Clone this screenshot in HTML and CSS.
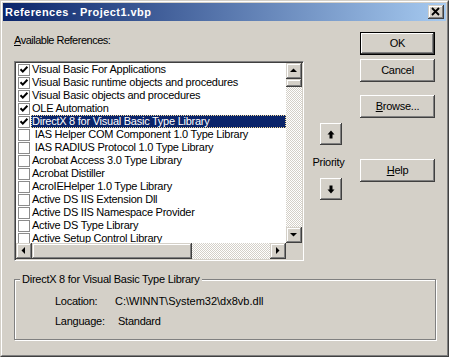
FILE: index.html
```html
<!DOCTYPE html>
<html>
<head>
<meta charset="utf-8">
<title>References - Project1.vbp</title>
<link rel="stylesheet" href="styles.css">
</head>
<body>
<div class="window">
  <div class="frame">
    <div class="titlebar">
      <span class="title">References - Project1.vbp</span>
      <button class="close" aria-label="Close">
        <svg width="16" height="14" viewBox="0 0 16 14"><path d="M4 3 L11 10 M11 3 L4 10" stroke="#000" stroke-width="1.8" fill="none"/></svg>
      </button>
    </div>
    <div class="body">
      <div class="main">
        <div class="left">
          <div class="label"><u>A</u>vailable References:</div>
          <div class="listbox">
            <div class="items">
              <div class="row"><span class="cb on"><svg width="10" height="10" viewBox="0 0 10 10"><path d="M1.5 4.2 L3.8 6.6 L8.4 1.8" stroke="#000" stroke-width="2" fill="none"/></svg></span><span class="txt">Visual Basic For Applications</span></div>
              <div class="row"><span class="cb on"><svg width="10" height="10" viewBox="0 0 10 10"><path d="M1.5 4.2 L3.8 6.6 L8.4 1.8" stroke="#000" stroke-width="2" fill="none"/></svg></span><span class="txt">Visual Basic runtime objects and procedures</span></div>
              <div class="row"><span class="cb on"><svg width="10" height="10" viewBox="0 0 10 10"><path d="M1.5 4.2 L3.8 6.6 L8.4 1.8" stroke="#000" stroke-width="2" fill="none"/></svg></span><span class="txt">Visual Basic objects and procedures</span></div>
              <div class="row"><span class="cb on"><svg width="10" height="10" viewBox="0 0 10 10"><path d="M1.5 4.2 L3.8 6.6 L8.4 1.8" stroke="#000" stroke-width="2" fill="none"/></svg></span><span class="txt">OLE Automation</span></div>
              <div class="row selected"><span class="cb on"><svg width="10" height="10" viewBox="0 0 10 10"><path d="M1.5 4.2 L3.8 6.6 L8.4 1.8" stroke="#000" stroke-width="2" fill="none"/></svg></span><span class="txt">DirectX 8 for Visual Basic Type Library</span></div>
              <div class="row"><span class="cb"></span><span class="txt"> IAS Helper COM Component 1.0 Type Library</span></div>
              <div class="row"><span class="cb"></span><span class="txt"> IAS RADIUS Protocol 1.0 Type Library</span></div>
              <div class="row"><span class="cb"></span><span class="txt">Acrobat Access 3.0 Type Library</span></div>
              <div class="row"><span class="cb"></span><span class="txt">Acrobat Distiller</span></div>
              <div class="row"><span class="cb"></span><span class="txt">AcroIEHelper 1.0 Type Library</span></div>
              <div class="row"><span class="cb"></span><span class="txt">Active DS IIS Extension Dll</span></div>
              <div class="row"><span class="cb"></span><span class="txt">Active DS IIS Namespace Provider</span></div>
              <div class="row"><span class="cb"></span><span class="txt">Active DS Type Library</span></div>
              <div class="row"><span class="cb"></span><span class="txt">Active Setup Control Library</span></div>
            </div>
            <div class="vscroll">
              <div class="sbtn"><svg width="16" height="16" viewBox="0 0 16 16"><path d="M4 9 L11 9 L7.5 5.5 Z" fill="#000"/></svg></div>
              <div class="vthumb"></div>
              <div class="track"></div>
              <div class="sbtn"><svg width="16" height="16" viewBox="0 0 16 16"><path d="M4 6 L11 6 L7.5 9.5 Z" fill="#000"/></svg></div>
            </div>
            <div class="hscroll">
              <div class="sbtn"><svg width="16" height="16" viewBox="0 0 16 16"><path d="M9 4 L9 11 L5.5 7.5 Z" fill="#000"/></svg></div>
              <div class="hthumb"></div>
              <div class="track"></div>
              <div class="sbtn"><svg width="16" height="16" viewBox="0 0 16 16"><path d="M6 4 L6 11 L9.5 7.5 Z" fill="#000"/></svg></div>
            </div>
            <div class="corner"></div>
          </div>
        </div>
        <div class="priority">
          <button class="btn arrow" aria-label="Move up"><svg width="8" height="9" viewBox="0 0 8 9"><path d="M4 0.5 L7.5 4.5 L5.5 4.5 L5.5 8.5 L2.5 8.5 L2.5 4.5 L0.5 4.5 Z" fill="#000"/></svg></button>
          <div class="plabel">Priority</div>
          <button class="btn arrow" aria-label="Move down"><svg width="8" height="9" viewBox="0 0 8 9"><path d="M4 8.5 L7.5 4.5 L5.5 4.5 L5.5 0.5 L2.5 0.5 L2.5 4.5 L0.5 4.5 Z" fill="#000"/></svg></button>
        </div>
        <div class="buttons">
          <button class="btn push default">OK</button>
          <button class="btn push cancel">Cancel</button>
          <button class="btn push browse"><u>B</u>rowse...</button>
          <button class="btn push help"><u>H</u>elp</button>
        </div>
      </div>
      <fieldset class="group">
        <legend>DirectX 8 for Visual Basic Type Library</legend>
        <div class="info">
          <span class="k">Location:</span><span class="v path">C:\WINNT\System32\dx8vb.dll</span>
          <span class="k">Language:</span><span class="v lang">Standard</span>
        </div>
      </fieldset>
    </div>
  </div>
</div>
</body>
</html>
```
FILE: styles.css
```css
* { box-sizing: border-box; }
html, body { margin: 0; padding: 0; background: #d4d0c8; }
body {
  font-family: "Liberation Sans", Arial, sans-serif;
  font-size: 11px;
  line-height: 13px;
  letter-spacing: -0.25px;
  color: #000;
}
.window {
  width: 449px;
  height: 357px;
  border: 1px solid;
  border-color: #d4d0c8 #404040 #404040 #d4d0c8;
  background: #d4d0c8;
}
.frame {
  height: 100%;
  border: 1px solid;
  border-color: #fff #808080 #808080 #fff;
  padding: 1px;
}
.titlebar {
  height: 18px;
  display: flex;
  align-items: center;
  justify-content: space-between;
  padding: 0 2px 0 2px;
  background: linear-gradient(to right, #0a246a, #a6caf0);
}
.title {
  color: #fff;
  font-weight: bold;
  font-size: 11px;
  letter-spacing: 0.45px;
}
.close {
  width: 16px;
  height: 14px;
  padding: 0;
  border: none;
  background: #d4d0c8;
  box-shadow: inset -1px -1px #404040, inset 1px 1px #d4d0c8, inset -2px -2px #808080, inset 2px 2px #fff;
  display: flex;
}
.close svg { display: block; }

.main { display: flex; align-items: flex-start; }
.left { margin-left: 11px; width: 290px; padding-top: 13px; }
.label { height: 13px; letter-spacing: -0.5px; }
.listbox {
  margin-top: 14px;
  width: 290px;
  height: 200px;
  border: 1px solid;
  border-color: #808080 #fff #fff #808080;
  box-shadow: inset 1px 1px #404040, inset -1px -1px #d4d0c8;
  padding: 1px;
  display: grid;
  grid-template-columns: 270px 16px;
  grid-template-rows: 180px 16px;
  background: #fff;
}
.items { overflow: hidden; background: #fff; }
.row {
  height: 13px;
  display: flex;
  align-items: center;
  padding-left: 2px;
  white-space: pre;
}
.cb {
  width: 12px;
  height: 12px;
  flex: none;
  border: 1px solid #8c8c8c;
  background: #fff;
  margin-right: 1px;
  display: flex;
}
.cb svg { display: block; margin: 0; }
.txt { padding-left: 1px; height: 13px; line-height: 13px; }
.row.selected .txt {
  flex: 1;
  background: #0a246a;
  color: #fff;
  outline: 1px dotted #f5db95;
  outline-offset: -1px;
}
.sbtn {
  width: 16px;
  height: 16px;
  flex: none;
  background: #d4d0c8;
  box-shadow: inset -1px -1px #404040, inset 1px 1px #d4d0c8, inset -2px -2px #808080, inset 2px 2px #fff;
}
.sbtn svg { display: block; }
.track {
  flex: 1;
  background-color: #fff;
  background-image: repeating-conic-gradient(#d4d0c8 0 25%, #fff 0 50%);
  background-size: 2px 2px;
}
.vscroll { display: flex; flex-direction: column; }
.vthumb, .hthumb {
  flex: none;
  background: #d4d0c8;
  box-shadow: inset -1px -1px #404040, inset 1px 1px #d4d0c8, inset -2px -2px #808080, inset 2px 2px #fff;
}
.vthumb { height: 8px; }
.hscroll { display: flex; }
.hthumb { width: 160px; }
.corner { background: #d4d0c8; }

.priority {
  margin-left: 16px;
  width: 22px;
  padding-top: 102px;
  display: flex;
  flex-direction: column;
  align-items: center;
}
.plabel { margin-top: 11px; margin-right: 5px; white-space: nowrap; height: 13px; }
.btn {
  font-family: inherit;
  font-size: 11px;
  line-height: 13px;
  letter-spacing: inherit;
  color: #000;
  background: #d4d0c8;
  border: none;
  padding: 0;
  box-shadow: inset -1px -1px #404040, inset 1px 1px #fff, inset -2px -2px #808080, inset 2px 2px #d4d0c8;
  display: flex;
  align-items: center;
  justify-content: center;
}
.arrow { width: 22px; height: 22px; flex: none; }
.priority .arrow + .plabel + .arrow { margin-top: 9px; }
.buttons {
  margin-left: 18px;
  width: 75px;
  padding-top: 11px;
  display: flex;
  flex-direction: column;
}
.push { width: 75px; height: 23px; }
.default { border: 1px solid #000; }
.cancel { margin-top: 4px; }
.browse { margin-top: 13px; }
.help { margin-top: 41px; }

.group {
  margin: 12px 0 0 11px;
  width: 422px;
  min-inline-size: 0;
  padding: 9px 0 11px 0;
  border: 1px solid #808080;
  box-shadow: inset 1px 1px #fff, 1px 1px #fff;
}
.group legend {
  margin-left: 5px;
  padding: 0 2px;
  line-height: 13px;
  background: #d4d0c8;
}
.info {
  margin-left: 40px;
  display: grid;
  grid-template-columns: 60px auto;
  row-gap: 7px;
}
.info .path { letter-spacing: 0; }
.info .lang { padding-left: 3px; }
```
